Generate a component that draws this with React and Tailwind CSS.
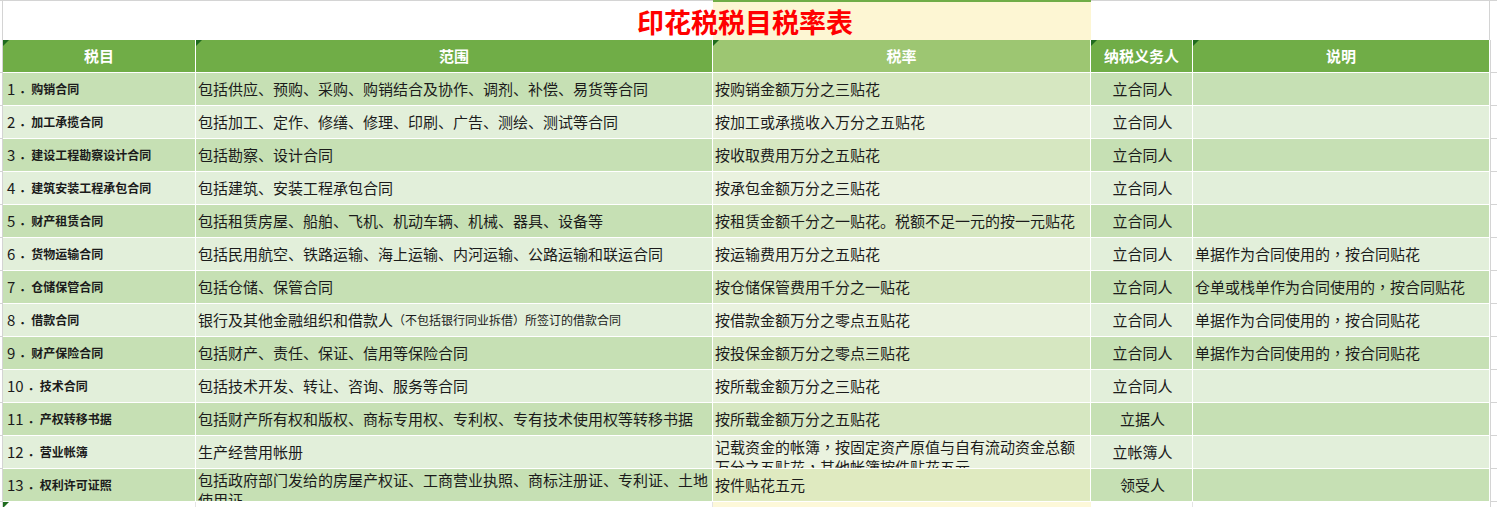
const rows = [
  { n: '1', name: '购销合同', scope: '包括供应、预购、采购、购销结合及协作、调剂、补偿、易货等合同', rate: '按购销金额万分之三贴花', who: '立合同人', note: '' },
  { n: '2', name: '加工承揽合同', scope: '包括加工、定作、修缮、修理、印刷、广告、测绘、测试等合同', rate: '按加工或承揽收入万分之五贴花', who: '立合同人', note: '' },
  { n: '3', name: '建设工程勘察设计合同', scope: '包括勘察、设计合同', rate: '按收取费用万分之五贴花', who: '立合同人', note: '' },
  { n: '4', name: '建筑安装工程承包合同', scope: '包括建筑、安装工程承包合同', rate: '按承包金额万分之三贴花', who: '立合同人', note: '' },
  { n: '5', name: '财产租赁合同', scope: '包括租赁房屋、船舶、飞机、机动车辆、机械、器具、设备等', rate: '按租赁金额千分之一贴花。税额不足一元的按一元贴花', who: '立合同人', note: '' },
  { n: '6', name: '货物运输合同', scope: '包括民用航空、铁路运输、海上运输、内河运输、公路运输和联运合同', rate: '按运输费用万分之五贴花', who: '立合同人', note: '单据作为合同使用的，按合同贴花' },
  { n: '7', name: '仓储保管合同', scope: '包括仓储、保管合同', rate: '按仓储保管费用千分之一贴花', who: '立合同人', note: '仓单或栈单作为合同使用的，按合同贴花' },
  { n: '8', name: '借款合同', scope: 'loan', rate: '按借款金额万分之零点五贴花', who: '立合同人', note: '单据作为合同使用的，按合同贴花' },
  { n: '9', name: '财产保险合同', scope: '包括财产、责任、保证、信用等保险合同', rate: '按投保金额万分之零点三贴花', who: '立合同人', note: '单据作为合同使用的，按合同贴花' },
  { n: '10', name: '技术合同', scope: '包括技术开发、转让、咨询、服务等合同', rate: '按所载金额万分之三贴花', who: '立合同人', note: '' },
  { n: '11', name: '产权转移书据', scope: '包括财产所有权和版权、商标专用权、专利权、专有技术使用权等转移书据', rate: '按所载金额万分之五贴花', who: '立据人', note: '' },
  { n: '12', name: '营业帐簿', scope: '生产经营用帐册', rate: '记载资金的帐簿，按固定资产原值与自有流动资金总额万分之五贴花，其他帐簿按件贴花五元', who: '立帐簿人', note: '' },
  { n: '13', name: '权利许可证照', scope: '包括政府部门发给的房屋产权证、工商营业执照、商标注册证、专利证、土地使用证', rate: '按件贴花五元', who: '领受人', note: '' },
]

const cols = 'grid grid-cols-[3px_193px_517px_378px_102px_297px_1fr]'
const tc = { fontFamily: '"Noto Sans CJK TC", sans-serif' }

// centred full-width commas, like the sheet's font
const withCommas = (text) =>
  text.split('，').map((part, i) => (
    <span key={i}>
      {i > 0 && <span style={tc}>，</span>}
      {part}
    </span>
  ))

const Marker = () => (
  <span className="absolute left-0 top-0 w-0 h-0 border-t-[6px] border-r-[6px] border-t-[#1f6b1f] border-r-transparent"></span>
)

const Cell = ({ bg, children, className = '', wrap = false }) => (
  <div
    className={`${bg} border-r border-b border-white overflow-hidden text-[15px] text-[#1b1b1b] ${
      wrap ? 'leading-5 pl-[2px] pt-px' : 'flex items-center pl-[2px] whitespace-nowrap'
    } ${className}`}
  >
    {children}
  </div>
)

export default function App() {
  return (
    <div
      className="w-[1497px] h-[507px] overflow-hidden bg-white"
      style={{ fontFamily: '"Noto Sans CJK SC", "Microsoft YaHei", sans-serif' }}
    >
      {/* title row */}
      <div className={`${cols} h-[40px] relative border-t border-[#d4d4d4]`}>
        <div className="border-r border-[#d4d4d4]"></div>
        <div></div>
        <div></div>
        <div className="bg-[#fdf6d3] border-t-2 border-[#70ad47] -mt-px"></div>
        <div></div>
        <div className="border-r border-[#d4d4d4]"></div>
        <div></div>
        <div className="absolute left-0 w-[1490px] top-0 h-[40px] flex items-center justify-center pointer-events-none">
          <span className="text-[27px] font-bold text-[#ff0000] leading-none">印花税税目税率表</span>
        </div>
      </div>

      {/* header row */}
      <div className={`${cols} h-[33px] text-white font-bold text-[15px]`}>
        <div className="border-r border-b border-[#d4d4d4]"></div>
        <div className="relative bg-[#70ad47] border-r border-b border-white flex items-center justify-center">
          <Marker />税目
        </div>
        <div className="relative bg-[#70ad47] border-r border-b border-white flex items-center justify-center">
          <Marker />范围
        </div>
        <div className="relative bg-[#9dc672] border-r border-b border-white flex items-center justify-center">
          <Marker />税率
        </div>
        <div className="relative bg-[#70ad47] border-r border-b border-white flex items-center justify-center">
          <Marker />纳税义务人
        </div>
        <div className="relative bg-[#70ad47] border-r border-b border-white flex items-center justify-center">
          <Marker />说明
        </div>
        <div className="border-l border-b border-[#d4d4d4]"></div>
      </div>

      {rows.map((r, i) => {
        const odd = i % 2 === 0
        const main = odd ? 'bg-[#c6e0b4]' : 'bg-[#e2efda]'
        let rateBg = odd ? 'bg-[#d6e7c1]' : 'bg-[#eaf2df]'
        if (r.n === '13') rateBg = 'bg-[#dfeac0]'
        return (
          <div key={r.n} className={`${cols} h-[33px]`}>
            <div className="border-r border-b border-[#d4d4d4]"></div>
            <Cell bg={main} className="pl-[4px]">
              <span className="text-[15px] font-normal">{r.n}</span>
              <span className="inline-block w-[16px] pl-[4px] text-[12px] font-bold">．</span>
              <span className="text-[12px] font-bold">{r.name}</span>
            </Cell>
            {r.scope === 'loan' ? (
              <Cell bg={main}>
                银行及其他金融组织和借款人
                <span className="text-[12px]" style={tc}>（</span>
                <span className="text-[12px]">不包括银行同业拆借</span>
                <span className="text-[12px]" style={tc}>）</span>
                <span className="text-[12px]">所签订的借款合同</span>
              </Cell>
            ) : (
              <Cell bg={main} wrap={r.n === '13'}>
                {r.scope}
              </Cell>
            )}
            <Cell bg={rateBg} wrap={r.n === '12'} className={r.n === '12' ? 'pt-0 pr-[6px]' : ''}>
              {withCommas(r.rate)}
            </Cell>
            <Cell bg={main} className="justify-center pl-0">
              {r.who}
            </Cell>
            <Cell bg={main}>{withCommas(r.note)}</Cell>
            <div className="border-l border-b border-[#d4d4d4]"></div>
          </div>
        )
      })}

      {/* partial row at bottom */}
      <div className={`${cols} h-[20px]`}>
        <div className="border-r border-[#d4d4d4]"></div>
        <div className="relative border-r border-[#e4e4e4]">
          <Marker />
        </div>
        <div className="border-r border-[#e4e4e4]"></div>
        <div className="bg-[#fdf8d9]"></div>
        <div className="border-r border-[#e4e4e4]"></div>
        <div></div>
        <div className="border-l border-[#d4d4d4]"></div>
      </div>
    </div>
  )
}
